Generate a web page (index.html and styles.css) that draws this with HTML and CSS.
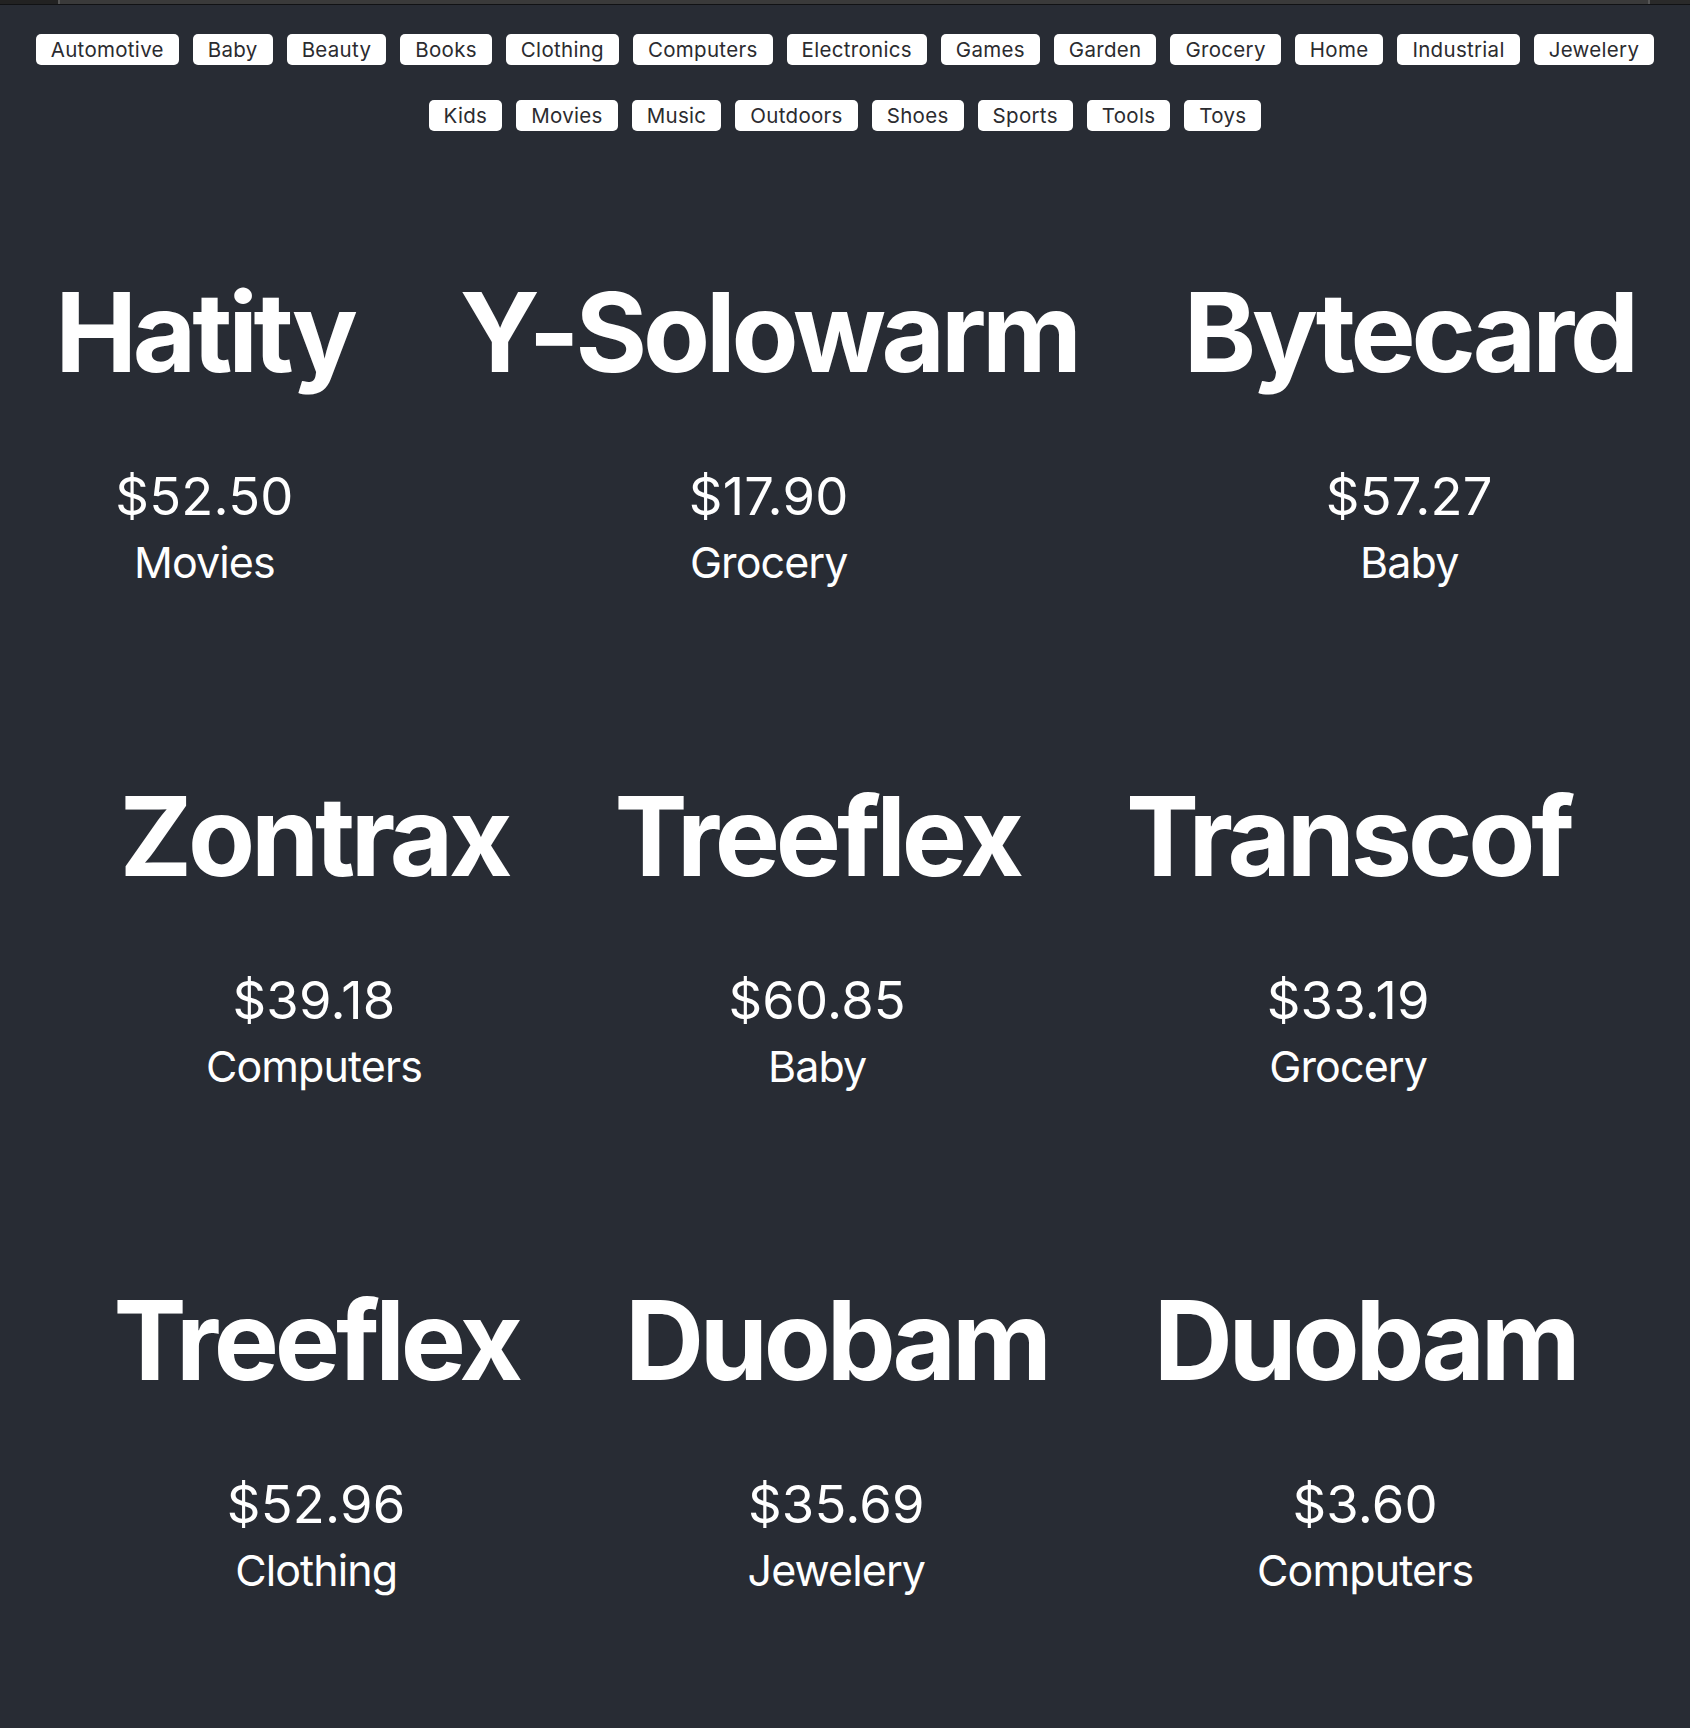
FILE: index.html
```html
<!DOCTYPE html>
<html lang="en">
<head>
<meta charset="utf-8">
<title>Products</title>
<link rel="stylesheet" href="styles.css">
</head>
<body>
<div class="chrome">
  <div class="chrome-left"></div>
  <div class="chrome-mid"></div>
  <div class="chrome-right"></div>
</div>
<main class="app">
  <nav class="filters">
    <div class="filter-row">
      <button class="tag">Automotive</button>
      <button class="tag">Baby</button>
      <button class="tag">Beauty</button>
      <button class="tag">Books</button>
      <button class="tag">Clothing</button>
      <button class="tag">Computers</button>
      <button class="tag">Electronics</button>
      <button class="tag">Games</button>
      <button class="tag">Garden</button>
      <button class="tag">Grocery</button>
      <button class="tag">Home</button>
      <button class="tag">Industrial</button>
      <button class="tag">Jewelery</button>
    </div>
    <div class="filter-row">
      <button class="tag">Kids</button>
      <button class="tag">Movies</button>
      <button class="tag">Music</button>
      <button class="tag">Outdoors</button>
      <button class="tag">Shoes</button>
      <button class="tag">Sports</button>
      <button class="tag">Tools</button>
      <button class="tag">Toys</button>
    </div>
  </nav>
  <section class="products">
    <div class="product-row">
      <div class="product"><h1 class="name">Hatity</h1><p class="price">$52.50</p><p class="category">Movies</p></div>
      <div class="product"><h1 class="name">Y-Solowarm</h1><p class="price">$17.90</p><p class="category">Grocery</p></div>
      <div class="product"><h1 class="name">Bytecard</h1><p class="price">$57.27</p><p class="category">Baby</p></div>
    </div>
    <div class="product-row">
      <div class="product"><h1 class="name">Zontrax</h1><p class="price">$39.18</p><p class="category">Computers</p></div>
      <div class="product"><h1 class="name">Treeflex</h1><p class="price">$60.85</p><p class="category">Baby</p></div>
      <div class="product"><h1 class="name">Transcof</h1><p class="price">$33.19</p><p class="category">Grocery</p></div>
    </div>
    <div class="product-row">
      <div class="product"><h1 class="name">Treeflex</h1><p class="price">$52.96</p><p class="category">Clothing</p></div>
      <div class="product"><h1 class="name">Duobam</h1><p class="price">$35.69</p><p class="category">Jewelery</p></div>
      <div class="product"><h1 class="name">Duobam</h1><p class="price">$3.60</p><p class="category">Computers</p></div>
    </div>
  </section>
</main>
</body>
</html>
```
FILE: styles.css
```css
* { box-sizing: border-box; }
html, body {
  margin: 0;
  padding: 0;
  background: #282c34;
}
body {
  font-family: Inter, "Noto Sans", sans-serif;
  color: #ffffff;
  min-height: 1728px;
}
.chrome {
  display: flex;
  height: 5px;
  border-bottom: 1px solid #111214;
}
.chrome-left {
  width: 60px;
  background: #222222;
  border-right: 2px solid #555555;
}
.chrome-mid {
  flex: 1;
  background: #3a3a3a;
}
.chrome-right {
  width: 42px;
  background: #2a2a2a;
  border-left: 2px solid #555555;
}
.app {
  display: flex;
  flex-direction: column;
  align-items: center;
}
.filters {
  display: flex;
  flex-direction: column;
  gap: 35px;
  padding-top: 29px;
}
.filter-row {
  display: flex;
  justify-content: center;
  gap: 14px;
}
.tag {
  font-family: Inter, "Noto Sans", sans-serif;
  font-size: 20.5px;
  line-height: 24px;
  letter-spacing: 0.3px;
  color: #2b2b2f;
  background: #ffffff;
  border: none;
  border-radius: 5px;
  padding: 4px 15px 3px;
  margin: 0;
}
.products {
  display: flex;
  flex-direction: column;
  gap: 182px;
  padding-top: 135px;
}
.product-row {
  display: flex;
  justify-content: center;
  gap: 106px;
}
.product {
  text-align: center;
}
.name {
  font-size: 109.5px;
  font-weight: 700;
  line-height: normal;
  margin: 0;
  letter-spacing: -4.2px;
}
.price {
  font-size: 52.5px;
  line-height: normal;
  letter-spacing: 0.2px;
  margin: 66px 0 0;
}
.category {
  font-size: 43px;
  line-height: normal;
  letter-spacing: -0.9px;
  margin: 8px 0 0;
}
```
